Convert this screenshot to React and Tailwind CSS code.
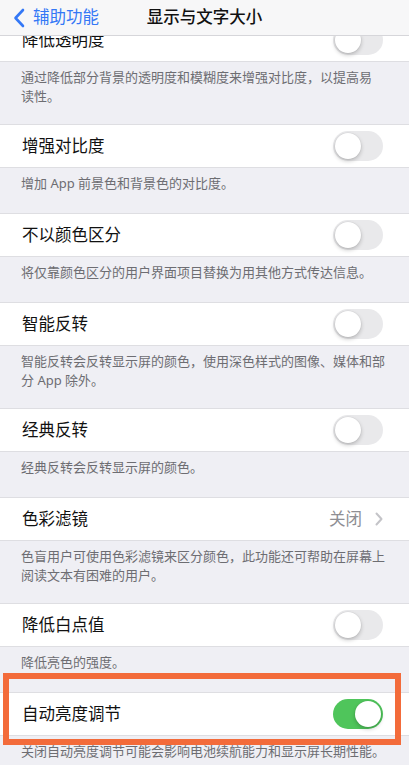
import React from "react";

const Toggle = ({ on = false }) => (
  <div
    className={
      on
        ? "w-[50px] h-[30px] rounded-full bg-[#4fc55b] flex items-center justify-end px-[2px]"
        : "w-[50px] h-[30px] rounded-full bg-[#e9e9eb] flex items-center justify-start px-[2px]"
    }
  >
    <div className="w-[26px] h-[26px] rounded-full bg-white shadow-[0_2px_4px_rgba(0,0,0,0.22),0_0_0_0.5px_rgba(0,0,0,0.06)]" />
  </div>
);

const Row = ({ label, children }) => (
  <div className="h-[44px] bg-white border-y border-[#dedee2] flex items-center justify-between pl-[22px] pr-[26px]">
    <span className="text-[16.5px] text-[#111]">{label}</span>
    {children}
  </div>
);

const Desc = ({ lines }) => (
  <div
    className={
      lines.length > 1
        ? "h-[62px] bg-[#efeff4] pl-[21px] pr-[20px] pt-[6px] text-[13px] leading-[19px] text-[#6d6d72]"
        : "h-[45px] bg-[#efeff4] pl-[21px] pr-[20px] pt-[6px] text-[13px] leading-[19px] text-[#6d6d72]"
    }
  >
    {lines.map((l, i) => (
      <div key={i} className="whitespace-nowrap">
        {l}
      </div>
    ))}
  </div>
);

const items = [
  {
    label: "增强对比度",
    desc: ["增加 App 前景色和背景色的对比度。"],
  },
  {
    label: "不以颜色区分",
    desc: ["将仅靠颜色区分的用户界面项目替换为用其他方式传达信息。"],
  },
  {
    label: "智能反转",
    desc: [
      "智能反转会反转显示屏的颜色，使用深色样式的图像、媒体和部",
      "分 App 除外。",
    ],
  },
  {
    label: "经典反转",
    desc: ["经典反转会反转显示屏的颜色。"],
  },
];

export default function App() {
  return (
    <div className="relative w-[409px] h-[765px] overflow-hidden bg-[#efeff4] font-['Noto_Sans','Noto_Sans_CJK_SC',sans-serif]">
      {/* nav bar */}
      <div className="h-[36px] bg-[#f7f7f8] border-b border-[#d6d6da] grid grid-cols-[1fr_auto_1fr] items-center">
        <div className="flex items-center pl-[13px] gap-[8px] text-[#3478f6]">
          <svg width="12" height="20" viewBox="0 0 12 20" fill="none">
            <path
              d="M10 2 L2.5 10 L10 18"
              stroke="#3478f6"
              strokeWidth="2.6"
              strokeLinecap="round"
              strokeLinejoin="round"
            />
          </svg>
          <span className="text-[16.5px]">辅助功能</span>
        </div>
        <span className="text-[16.5px] font-medium text-[#111]">显示与文字大小</span>
        <div />
      </div>

      {/* first row, scrolled partly under the nav */}
      <div className="h-[26px] overflow-hidden">
        <div className="-mt-[18px]">
          <Row label="降低透明度">
            <Toggle />
          </Row>
        </div>
      </div>
      <Desc
        lines={[
          "通过降低部分背景的透明度和模糊度来增强对比度，以提高易",
          "读性。",
        ]}
      />

      {items.map((it) => (
        <div key={it.label}>
          <Row label={it.label}>
            <Toggle />
          </Row>
          <Desc lines={it.desc} />
        </div>
      ))}

      <Row label="色彩滤镜">
        <div className="flex items-center gap-[13px]">
          <span className="text-[16.5px] text-[#8e8e93]">关闭</span>
          <svg width="8" height="14" viewBox="0 0 8 14" fill="none">
            <path
              d="M1.5 1.5 L6.5 7 L1.5 12.5"
              stroke="#c4c4c8"
              strokeWidth="2"
              strokeLinecap="round"
              strokeLinejoin="round"
            />
          </svg>
        </div>
      </Row>
      <Desc
        lines={[
          "色盲用户可使用色彩滤镜来区分颜色，此功能还可帮助在屏幕上",
          "阅读文本有困难的用户。",
        ]}
      />

      <Row label="降低白点值">
        <Toggle />
      </Row>
      <Desc lines={["降低亮色的强度。"]} />

      <Row label="自动亮度调节">
        <Toggle on />
      </Row>
      <Desc lines={["关闭自动亮度调节可能会影响电池续航能力和显示屏长期性能。"]} />

      {/* highlight frame */}
      <div className="absolute left-[3px] top-[673px] w-[398px] h-[72px] border-[6px] border-[#f36b3a]" />
    </div>
  );
}
